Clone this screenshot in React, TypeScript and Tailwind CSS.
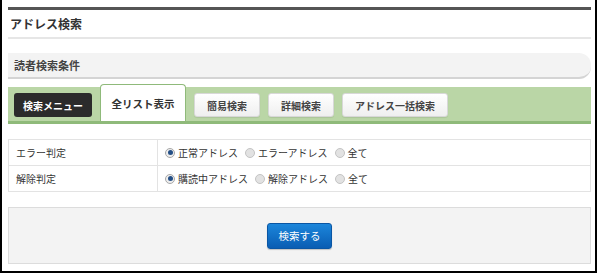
import React from "react";

const font = { fontFamily: '"Noto Sans CJK JP", "Noto Sans", sans-serif' };

const Radio = ({ checked, label }: { checked?: boolean; label: string }) => (
  <label className="flex items-center gap-[3px] mr-[7px]">
    {checked ? (
      <span className="w-[10px] h-[10px] rounded-full border border-[#a8a8a8] bg-[#eee] flex items-center justify-center">
        <span className="w-[5px] h-[5px] rounded-full bg-[#244f86]" />
      </span>
    ) : (
      <span className="w-[10px] h-[10px] rounded-full border border-[#c4c4c4] bg-[#e2e2e2]" />
    )}
    <span>{label}</span>
  </label>
);

const TabButton = ({ children }: { children: React.ReactNode }) => (
  <button className="h-[24px] px-[12px] rounded-[3px] border border-[#d8d8d8] bg-gradient-to-b from-white to-[#efefef] text-[10px] font-bold text-[#444] shadow-[0_1px_1px_rgba(0,0,0,0.08)]">
    {children}
  </button>
);

export default function App() {
  return (
    <div style={font} className="w-[597px] h-[273px] border-l-2 border-r-2 border-b-2 border-black bg-white pl-[6px] pr-[4px] pt-[7px] text-[#333]">
      <div className="border-t-[3px] border-[#555]" />
      <div className="h-[29px] flex items-center pl-[2px] text-[12px] font-bold text-[#333] border-b-2 border-[#e6e6e6] pt-[1px]">
        アドレス検索
      </div>
      <div className="mt-[14px] h-[26px] flex items-center pl-[6px] text-[11px] font-bold text-[#444] bg-[#f3f3f3] rounded-r-[12px] border-b-2 border-[#d4d4d4]">
        読者検索条件
      </div>
      <div className="mt-[8px] h-[37px] bg-[#bad6a6] border-b-[3px] border-[#8fba7a] flex items-start gap-[8px] pl-[6px] pt-[6px]">
        <button className="h-[24px] w-[78px] rounded-[3px] bg-[#2b2b2b] text-white text-[10px] font-bold">
          検索メニュー
        </button>
        <div className="-mt-[9px] h-[37px] w-[86px] bg-white border border-b-0 border-[#8fba7a] rounded-t-[4px] flex items-center justify-center text-[10.5px] font-bold text-[#333] relative z-10 pt-[2px]">
          全リスト表示
        </div>
        <TabButton>簡易検索</TabButton>
        <TabButton>詳細検索</TabButton>
        <TabButton>アドレス一括検索</TabButton>
      </div>
      <div className="mt-[15px] border border-[#e3e3e3] text-[10px]">
        <div className="flex h-[26px] border-b border-[#e3e3e3]">
          <div className="w-[149px] border-r border-[#e3e3e3] flex items-center pl-[7px]">エラー判定</div>
          <div className="flex items-center pl-[7px]">
            <Radio checked label="正常アドレス" />
            <Radio label="エラーアドレス" />
            <Radio label="全て" />
          </div>
        </div>
        <div className="flex h-[25px]">
          <div className="w-[149px] border-r border-[#e3e3e3] flex items-center pl-[7px]">解除判定</div>
          <div className="flex items-center pl-[7px]">
            <Radio checked label="購読中アドレス" />
            <Radio label="解除アドレス" />
            <Radio label="全て" />
          </div>
        </div>
      </div>
      <div className="mt-[15px] h-[57px] bg-[#f3f3f3] border border-[#dcdcdc] flex items-center justify-center">
        <button className="h-[26px] w-[65px] rounded-[3px] bg-gradient-to-b from-[#1c86db] to-[#0a5db3] border border-[#0a56a4] text-white text-[10.5px] shadow-[0_1px_1px_rgba(0,0,0,0.2)]">
          検索する
        </button>
      </div>
    </div>
  );
}
